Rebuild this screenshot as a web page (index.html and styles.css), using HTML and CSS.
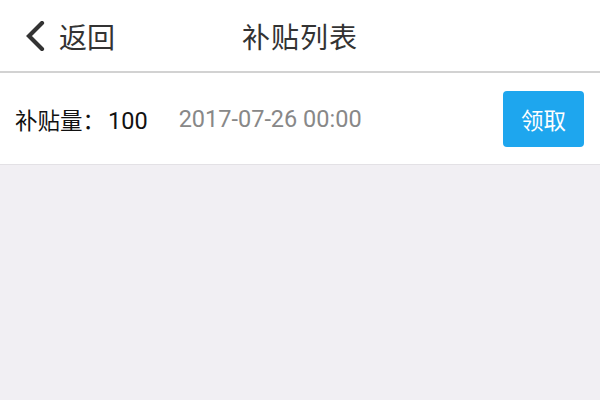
FILE: index.html
```html
<!DOCTYPE html>
<html lang="zh">
<head>
<meta charset="utf-8">
<link rel="stylesheet" href="styles.css">
</head>
<body>
<header class="topbar">
  <div class="back">
    <svg class="chev" width="22" height="30" viewBox="0 0 22 30"><path d="M18 2 L5 15 L18 28" fill="none" stroke="#333" stroke-width="4.2" stroke-linecap="round" stroke-linejoin="miter"/></svg>
    <span class="back-text">返回</span>
  </div>
  <h1 class="title">补贴列表</h1>
</header>
<div class="row">
  <span class="amount">补贴量：<span class="num">100</span></span>
  <span class="date">2017-07-26 00:00</span>
  <button class="btn">领取</button>
</div>
</body>
</html>
```
FILE: styles.css
```css
html, body { margin: 0; padding: 0; }
body {
  width: 600px; height: 400px; overflow: hidden;
  background: #f1eff3;
  font-family: "Noto Sans CJK SC", "Noto Sans", sans-serif;
}
.topbar {
  height: 71px;
  background: #fff;
  border-bottom: 2px solid #d2d2d2;
  position: relative;
  display: flex; align-items: center; justify-content: center;
}
.back {
  position: absolute; left: 24px; top: 0; height: 71px;
  display: flex; align-items: center;
}
.chev { display: block; margin-top: 1px; }
.back-text {
  margin-left: 13px; font-size: 28px; color: #333; line-height: 1;
}
.title {
  margin: 0; font-weight: normal; font-size: 28px; color: #333;
  letter-spacing: 1px; line-height: 1;
}
.row {
  height: 91px; background: #fff;
  border-bottom: 1px solid #e3e1e5;
  display: flex; align-items: center;
  padding: 0 16px 0 15px;
}
.amount { font-size: 22.5px; color: #111; }
.num { font-family: Roboto, "Noto Sans", sans-serif; font-size: 23.5px; margin-left: 3px; }
.date { font-size: 23.5px; color: #888; margin-left: 31px; font-family: Roboto, "Noto Sans", sans-serif; }
.btn {
  margin-left: auto;
  width: 81px; height: 56px;
  background: #1ea6ee; border: 0; border-radius: 4px;
  color: #fff; font-size: 22.5px; font-family: inherit;
  padding: 0;
}
```
